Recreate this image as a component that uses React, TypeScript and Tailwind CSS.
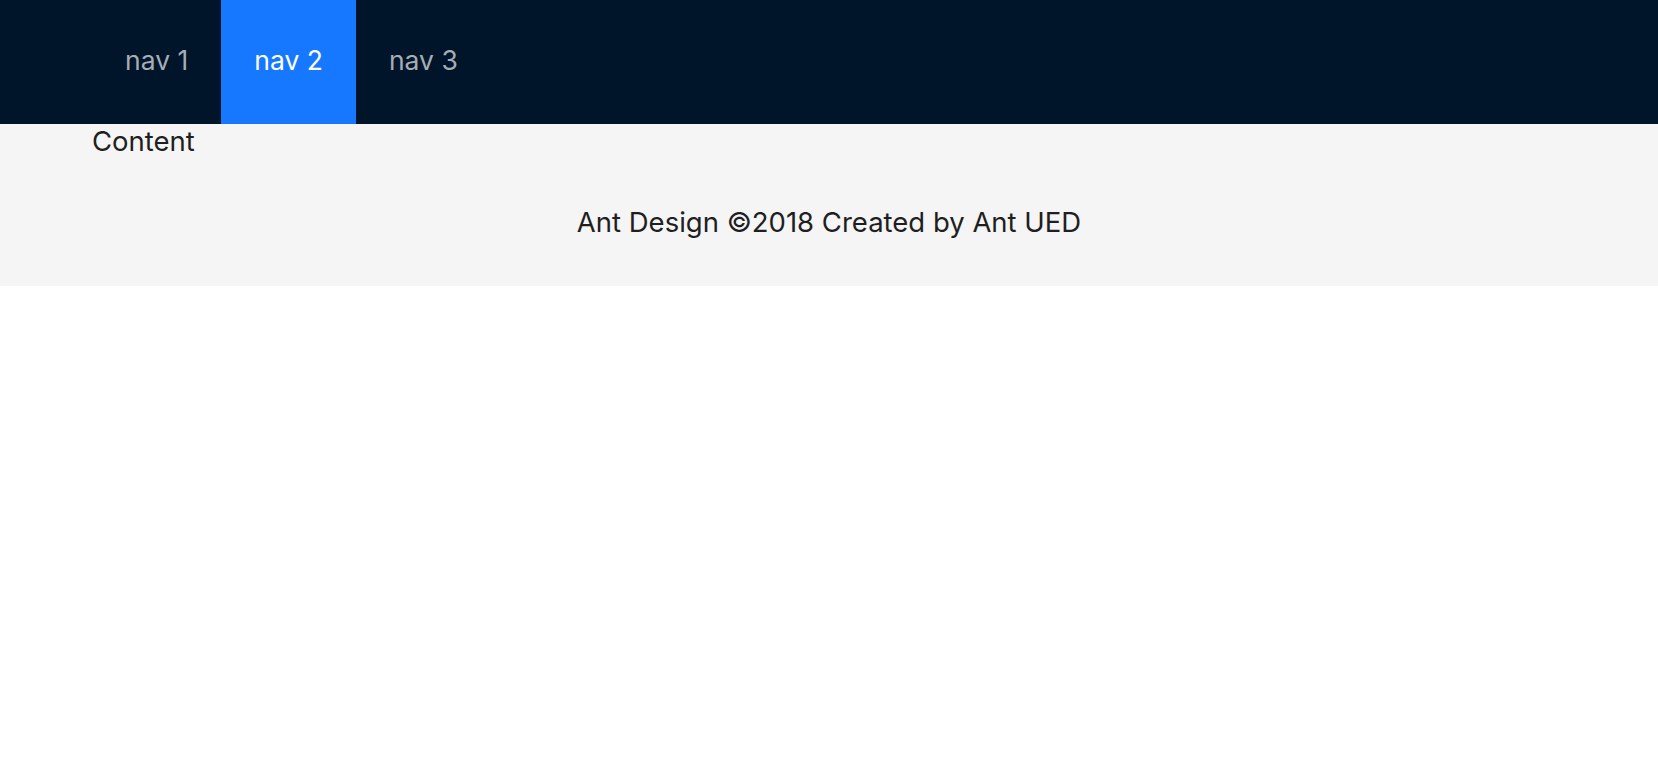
import React from "react";

const items = ["nav 1", "nav 2", "nav 3"];

export default function App() {
    const active = 1;

    return (
        <div className="min-h-screen bg-white font-['Inter',sans-serif]">
            <header className="h-[124px] bg-[#001529] pl-[92px] flex items-stretch">
                {items.map((label, i) => (
                    <div
                        key={label}
                        className={
                            i === active
                                ? "px-[33px] text-[26.5px] leading-[120px] bg-[#1677ff] text-white"
                                : "px-[33px] text-[26.5px] leading-[120px] text-[#a6adb4]"
                        }
                    >
                        {label}
                    </div>
                ))}
            </header>

            <div className="bg-[#f5f5f5]">
                <main className="px-[92px] text-[27.5px] leading-[35px] text-[#1f1f1f]">Content</main>
                <footer className="py-[46px] text-center text-[27.5px] leading-[35px] text-[#1f1f1f]">
                    Ant Design ©2018 Created by Ant UED
                </footer>
            </div>
        </div>
    );
}
